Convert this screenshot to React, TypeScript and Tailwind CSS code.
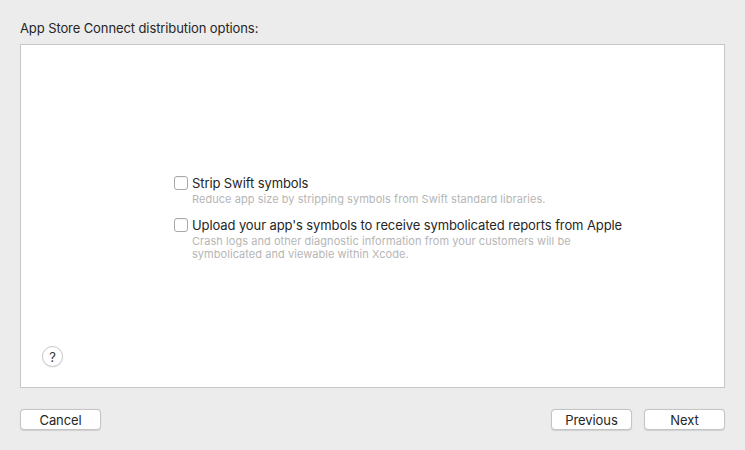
import React from 'react'

const Checkbox: React.FC = () => (
  <span className="mt-[1px] block h-[14px] w-[14px] shrink-0 rounded-[3px] border border-[#a8a8a8] bg-white shadow-[inset_0_1px_0_rgba(0,0,0,0.04)]" />
)

const Button: React.FC<{ label: string }> = ({ label }) => (
  <button className="h-[21px] w-[81px] rounded-[4px] border border-[#c4c4c4] bg-white pt-[1px] text-[13px] leading-[19px] text-[#262626] shadow-[0_0.5px_1px_rgba(0,0,0,0.12)]">
    {label}
  </button>
)

const App: React.FC = () => {
  return (
    <div
      className="flex h-[450px] w-[745px] flex-col bg-[#ececec] px-[20px] pt-[20px] pb-[20px] tracking-[-0.1px] text-[#262626]"
      style={{ fontFamily: 'Inter, "Liberation Sans", sans-serif' }}
    >
      <div className="text-[13px] leading-[16px]">App Store Connect distribution options:</div>

      <div className="mt-[8px] flex h-[344px] flex-col border border-[#c6c6c6] bg-white">
        <div className="flex flex-1 flex-col justify-center pl-[153px] pt-[44px]">
          <div className="flex gap-[4px]">
            <Checkbox />
            <div>
              <div className="text-[13px] leading-[16px]">Strip Swift symbols</div>
              <div className="mt-[2px] text-[11px] leading-[13px] tracking-[0.05px] text-[#b6b6b6]">
                Reduce app size by stripping symbols from Swift standard libraries.
              </div>
            </div>
          </div>
          <div className="mt-[11px] flex gap-[4px]">
            <Checkbox />
            <div>
              <div className="text-[13px] leading-[16px]">
                Upload your app's symbols to receive symbolicated reports from Apple
              </div>
              <div className="mt-[2px] text-[11px] leading-[13px] tracking-[0.05px] text-[#b6b6b6]">
                Crash logs and other diagnostic information from your customers will be
                <br />
                symbolicated and viewable within Xcode.
              </div>
            </div>
          </div>
        </div>
        <div className="pb-[20px] pl-[21px]">
          <button className="flex h-[21px] w-[21px] items-center justify-center rounded-full border border-[#c8c8c8] bg-white pt-[1px] text-[13px] leading-none text-[#333] shadow-[0_0.5px_1px_rgba(0,0,0,0.1)]">
            ?
          </button>
        </div>
      </div>

      <div className="mt-auto flex items-center">
        <Button label="Cancel" />
        <div className="flex-1" />
        <div className="flex gap-[12px]">
          <Button label="Previous" />
          <Button label="Next" />
        </div>
      </div>
    </div>
  )
}

export default App
